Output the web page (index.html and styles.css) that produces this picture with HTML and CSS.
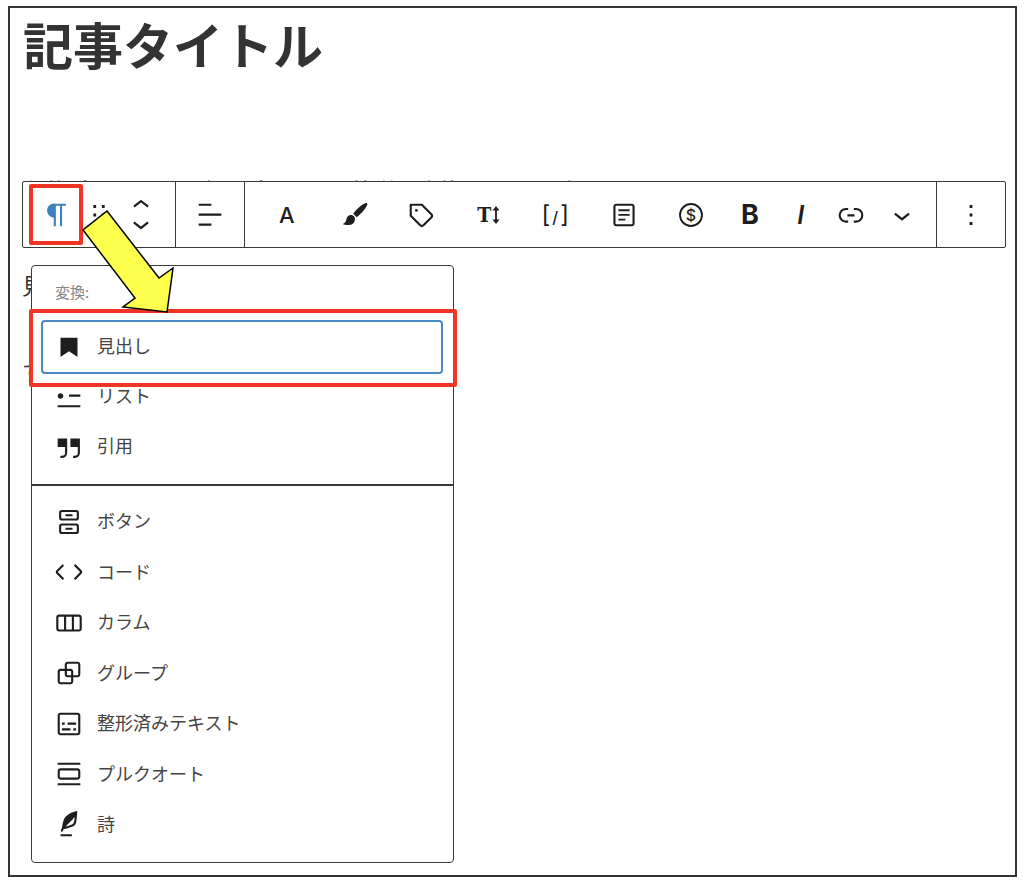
FILE: index.html
```html
<!DOCTYPE html>
<html lang="ja">
<head>
    <meta charset="UTF-8" />
    <meta name="viewport" content="width=device-width, initial-scale=1.0" />
    <title>記事タイトル</title>
    <link rel="stylesheet" href="styles.css">
</head>
<body>
    <div class="frame">
        <h1 class="post-title">記事タイトル</h1>
        <p class="para first">段落ブロックは見出しブロックへ簡単に変換することができます。</p>
        <p class="para second">見</p>
        <p class="para third">す</p>

        <div class="toolbar">
            <div class="group group-block">
                <button class="tool">
                    <svg class="icon para-icon" viewBox="0 0 24 24"><path d="M18.3 4H9.9v-.1l-.9.2c-2.3.4-4 2.4-4 4.8s1.7 4.4 4 4.8l.7.1V20h1.5V5.5h2.9V20h1.5V5.5h2.7V4z"/></svg>
                </button>
                <button class="tool">
                    <svg class="icon" viewBox="0 0 24 24"><path d="M8 7h2V5H8v2zm0 6h2v-2H8v2zm0 6h2v-2H8v2zm6-14v2h2V5h-2zm0 8h2v-2h-2v2zm0 6h2v-2h-2v2z"/></svg>
                </button>
                <button class="tool">
                    <svg class="icon mover" viewBox="0 0 24 40"><path transform="translate(0 1.5)" d="M6.5 12.4L12 8l5.5 4.4-.9 1.2L12 10l-4.5 3.6-1-1.2z"/><path transform="translate(0 14.5)" d="M17.5 11.6L12 16l-5.5-4.4.9-1.2L12 14l4.5-3.6 1 1.2z"/></svg>
                </button>
            </div>
            <div class="group group-align">
                <button class="tool">
                    <svg class="icon" viewBox="0 0 24 24"><path d="M13 5.5H4V4h9v1.5Zm7 7H4V11h16v1.5Zm-7 7H4V18h9v1.5Z"/></svg>
                </button>
            </div>
            <div class="group group-format">
                <button class="tool wide"><span class="txt-a">A</span></button>
                <button class="tool wide">
                    <svg class="icon" viewBox="0 0 24 24"><path d="M20.4 3.6c-3.4 1.3-6.800 4.600-8.900 7.500l2.400 2.400c2.900-2.100 6.200-5.500 7.500-8.900.3-.7-.3-1.300-1-1zM10.300 12c-2.400-.2-3.400 1.500-3.700 3.200-.2 1.300-.8 2.500-2.600 3.200 2.900 1.300 8.600 1.300 8.700-3.600 0-1.300-1-2.700-2.400-2.800z"/></svg>
                </button>
                <button class="tool wide">
                    <svg class="icon" viewBox="0 0 24 24"><path d="M4.750 4a.75.75 0 0 0-.75.75v7.826c0 .2.08.39.22.53l6.720 6.716a2.313 2.313 0 0 0 3.276-.001l5.610-5.611-.531-.53.532.528a2.315 2.315 0 0 0 0-3.264L13.104 4.220a.75.75 0 0 0-.53-.22H4.750ZM19 12.576a.815.815 0 0 1-.236.574l-5.610 5.611a.814.814 0 0 1-1.153 0L5.500 12.264V5.500h6.763l6.500 6.502a.816.816 0 0 1 .237.574ZM8.750 9.750a1 1 0 1 0 0-2 1 1 0 0 0 0 2Z"/></svg>
                </button>
                <button class="tool wide">
                    <span class="txt-t">T</span>
                    <svg class="size-arrow" viewBox="0 0 8 18"><path d="M4 0l3.500 4.500H4.900v9h2.600L4 18 .5 13.500h2.600v-9H.5z"/></svg>
                </button>
                <button class="tool wide"><span class="txt-code">[<span class="txt-slash">/</span>]</span></button>
                <button class="tool wide">
                    <svg class="icon" viewBox="0 0 24 24"><path d="M17.500 4h-11C5.400 4 4.500 4.900 4.500 6v12c0 1.100.9 2 2 2h11c1.100 0 2-.9 2-2V6c0-1.100-.9-2-2-2zm.5 14c0 .3-.2.5-.5.5h-11c-.3 0-.5-.2-.5-.5V6c0-.3.2-.5.5-.5h11c.3 0 .5.2.5.5v12zM8 8h8v1.300H8V8zm0 3.300h8v1.300H8v-1.300zm0 3.300h5v1.300H8v-1.300z"/></svg>
                </button>
                <button class="tool wide">
                    <svg class="icon" viewBox="0 0 24 24"><circle class="ring" cx="12" cy="12" r="7.750"/></svg>
                    <span class="txt-dollar">$</span>
                </button>
                <button class="tool narrow"><span class="txt-b">B</span></button>
                <button class="tool narrow"><span class="txt-i">I</span></button>
                <button class="tool narrow">
                    <svg class="icon" viewBox="0 0 24 24"><path d="M10 17.389H8.444A5.194 5.194 0 1 1 8.444 7H10v1.500H8.444a3.694 3.694 0 0 0 0 7.389H10v1.500ZM14 7h1.556a5.194 5.194 0 0 1 0 10.390H14v-1.500h1.556a3.694 3.694 0 0 0 0-7.390H14V7Zm-4.500 6h5v-1.500h-5V13Z"/></svg>
                </button>
                <button class="tool narrow">
                    <svg class="icon" viewBox="0 0 24 24"><path d="M17.500 11.600L12 16l-5.500-4.400.9-1.200L12 14l4.500-3.600 1 1.200z"/></svg>
                </button>
            </div>
            <div class="group group-more">
                <button class="tool">
                    <svg class="icon" viewBox="0 0 24 24"><path d="M13 19h-2v-2h2v2zm0-6h-2v-2h2v2zm0-6h-2V5h2v2z"/></svg>
                </button>
            </div>
        </div>

        <div class="menu">
            <div class="menu-label">変換:</div>
            <div class="menu-item focused">
                <svg class="icon" viewBox="0 0 24 24"><path d="M6 5.500h12V19l-6-4-6 4z"/></svg>
                <span>見出し</span>
            </div>
            <div class="menu-item">
                <svg class="icon" viewBox="0 0 24 24"><path d="M4 4v1.500h16V4H4zm8 8.500h8V11h-8v1.500zM4 20h16v-1.500H4V20zm4-8c0-1.100-.9-2-2-2s-2 .9-2 2 .9 2 2 2 2-.9 2-2z"/></svg>
                <span>リスト</span>
            </div>
            <div class="menu-item">
                <svg class="icon" viewBox="0 0 24 24"><path d="M13 6v6h5.200v4c0 .8-.2 1.400-.5 1.700-.6.6-1.600.6-2.500.5h-.3v1.500h.5c1 0 2.300-.1 3.300-1 .6-.6 1-1.600 1-2.800V6H13zm-9 6h5.200v4c0 .8-.2 1.400-.5 1.700-.6.6-1.600.6-2.500.5h-.3v1.500h.5c1 0 2.300-.1 3.300-1 .6-.6 1-1.600 1-2.800V6H4v6z"/></svg>
                <span>引用</span>
            </div>
            <div class="menu-divider"></div>
            <div class="menu-item">
                <svg class="icon" viewBox="0 0 24 24"><path d="M7 3.500h10a2 2 0 0 1 2 2V9a2 2 0 0 1-2 2H7a2 2 0 0 1-2-2V5.500a2 2 0 0 1 2-2zM7 5c-.3 0-.5.2-.5.5V9c0 .3.2.5.5.5h10c.3 0 .5-.2.5-.5V5.500c0-.3-.2-.5-.5-.5H7zm2.500 1.500h5V8h-5V6.500zM7 13h10a2 2 0 0 1 2 2v3.500a2 2 0 0 1-2 2H7a2 2 0 0 1-2-2V15a2 2 0 0 1 2-2zm0 1.500c-.3 0-.5.2-.5.5v3.500c0 .3.2.5.5.5h10c.3 0 .5-.2.5-.5V15c0-.3-.2-.5-.5-.5H7zm2.500 1.500h5v1.500h-5V16z"/></svg>
                <span>ボタン</span>
            </div>
            <div class="menu-item">
                <svg class="icon" viewBox="0 0 24 24"><path d="M20.800 10.700l-4.300-4.300-1.100 1.100 4.300 4.300c.1.1.1.3 0 .4l-4.300 4.300 1.100 1.100 4.300-4.300c.7-.8.7-1.900 0-2.600zM4.200 11.800l4.300-4.300-1-1-4.300 4.300c-.7.7-.7 1.800 0 2.500l4.300 4.300 1.100-1.100-4.300-4.300c-.2-.1-.2-.3-.1-.4z"/></svg>
                <span>コード</span>
            </div>
            <div class="menu-item">
                <svg class="icon" viewBox="0 0 24 24"><path d="M19 6H5c-1.100 0-2 .9-2 2v8c0 1.100.9 2 2 2h14c1.100 0 2-.9 2-2V8c0-1.100-.9-2-2-2zM4.500 16V8c0-.3.2-.5.5-.5h3.500v9H5c-.3 0-.5-.2-.5-.5zm5.500.5v-9h4v9h-4zm9.500-.5c0 .3-.2.5-.5.5h-3.500v-9H19c.3 0 .5.2.5.5v8z"/></svg>
                <span>カラム</span>
            </div>
            <div class="menu-item">
                <svg class="icon" viewBox="0 0 24 24"><path d="M18 4h-7c-1.100 0-2 .9-2 2v3H6c-1.100 0-2 .9-2 2v7c0 1.100.9 2 2 2h7c1.100 0 2-.9 2-2v-3h3c1.100 0 2-.9 2-2V6c0-1.100-.9-2-2-2zm-4.500 14c0 .3-.2.5-.5.5H6c-.3 0-.5-.2-.5-.5v-7c0-.3.2-.5.5-.5h3V13c0 1.100.9 2 2 2h2.500v3zm0-4.500H11c-.3 0-.5-.2-.5-.5v-2.500H13c.3 0 .5.2.5.5v2.500zm5-.5c0 .3-.2.5-.5.5h-3V11c0-1.100-.9-2-2-2h-2.500V6c0-.3.2-.5.5-.5h7c.3 0 .5.2.5.5v7z"/></svg>
                <span>グループ</span>
            </div>
            <div class="menu-item">
                <svg class="icon" viewBox="0 0 24 24"><path d="M18 4H6c-1.100 0-2 .9-2 2v12c0 1.100.9 2 2 2h12c1.100 0 2-.9 2-2V6c0-1.100-.9-2-2-2zm.5 14c0 .3-.2.5-.5.5H6c-.3 0-.5-.2-.5-.5V6c0-.3.2-.5.5-.5h12c.3 0 .5.2.5.5v12zM7 16.500h6V15H7v1.500zm4-4h6V11h-6v1.500zM9 11H7v1.500h2V11zm6 5.500h2V15h-2v1.500z"/></svg>
                <span>整形済みテキスト</span>
            </div>
            <div class="menu-item">
                <svg class="icon" viewBox="0 0 24 24"><path d="M18 8H6c-1.100 0-2 .9-2 2v4c0 1.100.9 2 2 2h12c1.100 0 2-.9 2-2v-4c0-1.100-.9-2-2-2zm.5 6c0 .3-.2.5-.5.5H6c-.3 0-.5-.2-.5-.5v-4c0-.3.2-.5.5-.5h12c.3 0 .5.2.5.5v4zM4 4v1.500h16V4H4zm0 16h16v-1.500H4V20z"/></svg>
                <span>プルクオート</span>
            </div>
            <div class="menu-item">
                <svg class="icon" viewBox="0 0 24 24"><path d="M17.800 2l-.9.3c-.1 0-3.600 1-5.200 2.100C10 5.500 9.300 6.500 8.900 7.100c-.6.9-1.700 4.700-1.700 6.300l-.9 2.300c-.2.4 0 .8.4 1 .1 0 .2.1.3.1.3 0 .6-.2.7-.5l.6-1.500c.3 0 .7-.1 1.200-.2.7-.1 1.400-.3 2.200-.5.8-.2 1.600-.5 2.400-.8.7-.3 1.400-.7 1.900-1.200s.8-1.200 1-1.900c.2-.7.3-1.600.4-2.400.1-.8.1-1.700.2-2.500 0-.8.1-1.500.2-2.100V2zm-1.900 5.600c-.1.8-.2 1.500-.3 2.100-.2.6-.4 1-.6 1.300-.3.3-.8.6-1.400.9-.7.3-1.400.5-2.200.8-.6.2-1.300.3-1.800.4L15 7.500c.3-.3.6-.7 1-1.100 0 .4 0 .8-.1 1.200zM6 20h8v-1.500H6V20z"/></svg>
                <span>詩</span>
            </div>
        </div>

        <div class="mark mark-block"></div>
        <div class="mark mark-heading"></div>
        <svg class="arrow" viewBox="0 0 110 120">
            <polygon points="34,1 86,68 100,58 94,102 50,97 62,88 10,20"/>
        </svg>
    </div>
</body>
</html>
```

FILE: styles.css
```css
* {
    box-sizing: border-box;
}

body {
    margin: 0;
    background: #fff;
    font-family: 'Noto Sans CJK JP', 'Noto Sans', sans-serif;
    color: #333;
}

.frame {
    position: relative;
    width: 1009px;
    height: 871px;
    margin: 6px 0 0 8px;
    border: 2px solid #333;
    overflow: hidden;
}

.post-title {
    margin: 0;
    padding: 5px 0 0 13px;
    height: 170px;
    font-size: 50px;
    line-height: 60px;
    font-weight: 700;
    color: #333;
}

.para {
    margin: 0;
    padding-left: 12px;
    font-size: 22px;
    line-height: 32px;
    white-space: nowrap;
    color: #333;
}

/* only the top of this line shows above the toolbar */
.first {
    height: 3px;
    line-height: 22px;
    margin-bottom: 87px;
    overflow: hidden;
}

.second {
    margin-bottom: 54px;
}

/* floating block toolbar */
.toolbar {
    position: absolute;
    left: 12px;
    top: 173px;
    width: 984px;
    height: 67px;
    display: flex;
    background: #fff;
    border: 1.5px solid #3a3a3a;
    border-radius: 2px;
}

.group {
    display: flex;
    align-items: center;
    height: 100%;
    border-right: 1.5px solid #3a3a3a;
}

.group-block {
    width: 153px;
    padding-left: 13px;
}

.group-align {
    width: 69px;
    justify-content: center;
}

.group-format {
    width: 692px;
    padding-left: 8px;
}

.group-more {
    flex: 1;
    justify-content: center;
    border-right: none;
}

.tool {
    position: relative;
    display: flex;
    align-items: center;
    justify-content: center;
    width: 42px;
    height: 100%;
    padding: 0;
    border: none;
    background: none;
    color: #1e1e1e;
    font-family: 'Inter', 'Liberation Sans', sans-serif;
}

.wide {
    width: 67.4px;
}

.narrow {
    width: 50.6px;
}

.icon {
    flex: none;
    width: 34px;
    height: 34px;
    fill: #1e1e1e;
}

.para-icon {
    fill: #3c81be;
}

.mover {
    height: 57px;
}

.ring {
    fill: none;
    stroke: #1e1e1e;
    stroke-width: 1.300;
}

.txt-a {
    font-size: 22px;
    font-weight: 500;
}

.txt-t {
    font-family: 'DejaVu Serif', serif;
    font-stretch: condensed;
    font-size: 21px;
    font-weight: 700;
}

.size-arrow {
    width: 8px;
    height: 18px;
    margin-left: 1px;
    fill: #1e1e1e;
}

.txt-code {
    font-size: 24px;
    font-weight: 400;
    letter-spacing: 2px;
}

.txt-slash {
    font-size: 16px;
    font-weight: 500;
}

.txt-dollar {
    position: absolute;
    left: 0;
    right: 0;
    text-align: center;
    font-size: 16px;
    font-weight: 500;
}

.txt-b {
    font-size: 27px;
    font-weight: 700;
}

.txt-i {
    font-size: 25px;
    font-weight: 600;
    font-style: italic;
}

/* transform menu */
.menu {
    position: absolute;
    left: 21px;
    top: 257px;
    width: 423px;
    height: 598px;
    padding: 10px 10px 0 9px;
    background: #fff;
    border: 1.5px solid #3a3a3a;
    border-radius: 4px;
}

.menu-label {
    height: 44px;
    padding: 4px 0 0 14px;
    font-size: 15px;
    line-height: 24px;
    color: #858585;
}

.menu-item {
    display: flex;
    align-items: center;
    gap: 11px;
    height: 50.5px;
    padding-left: 11px;
    font-size: 18px;
    color: #444;
}

.menu-item span {
    margin-bottom: 3px;
}

.focused {
    height: 53.5px;
    margin: 0 0 -2.5px;
    border: 2px solid #4a8ac4;
    border-radius: 4px;
    padding-left: 9px;
}

.menu-divider {
    height: 1.5px;
    margin: 12px -10px 11px -9px;
    background: #3a3a3a;
}

/* annotations on top of the screenshot */
.mark {
    position: absolute;
    border: 4px solid #ef3524;
    border-radius: 2px;
}

.mark-block {
    left: 19px;
    top: 176px;
    width: 54px;
    height: 61px;
}

.mark-heading {
    left: 19px;
    top: 301px;
    width: 428px;
    height: 78px;
}

.arrow {
    position: absolute;
    left: 63px;
    top: 202px;
    width: 110px;
    height: 120px;
}

.arrow polygon {
    fill: #ffff4d;
    stroke: #000;
    stroke-width: 1.500;
}
```
